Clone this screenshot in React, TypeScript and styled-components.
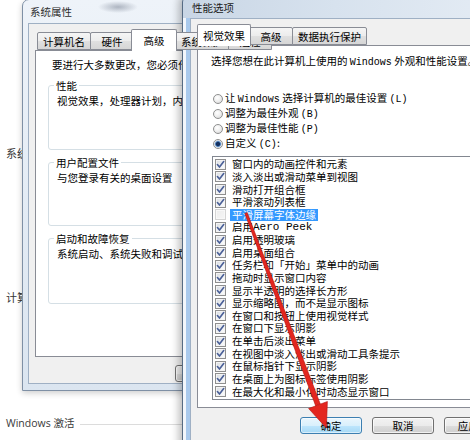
import React from "react";
import styled, { createGlobalStyle } from "styled-components";

const GlobalStyle = createGlobalStyle`
  html, body { margin: 0; padding: 0; background: #ffffff; }
  body {
    width: 470px; height: 440px; overflow: hidden;
    font-family: "Noto Sans CJK SC", "Noto Sans", sans-serif;
    font-size: 10.5px; color: #000;
  }
  * { box-sizing: border-box; }
`;

const Desktop = styled.div`
  position: relative;
  width: 470px;
  height: 440px;
  overflow: hidden;
  background: #ffffff;
`;

/* ---------- control panel page behind the dialogs ---------- */
const Backdrop = styled.div`
  position: absolute;
  inset: 0;
  display: flex;
  flex-direction: column;
  padding: 146px 0 0 6px;
`;

const BackHeading = styled.div<{ $mt?: number }>`
  margin-top: ${(p) => p.$mt ?? 0}px;
  font-size: 11px;
  line-height: 14px;
  color: #333;
`;

const ActivationRow = styled.div<{ $mt: number }>`
  margin-top: ${(p) => p.$mt}px;
  display: flex;
  align-items: center;
  gap: 6px;
  font-family: "Open Sans", "Noto Sans CJK SC", sans-serif;
  font-size: 10.5px;
  line-height: 14px;
  color: #3a3a3a;
`;

const ActivationLine = styled.span`
  flex: 1;
  height: 1px;
  margin-top: 3px;
  background: #dcdcdc;
`;

/* ---------- window chrome ---------- */
const Win = styled.div<{ $x: number; $y: number; $w: number; $h: number; $active?: boolean }>`
  position: absolute;
  left: ${(p) => p.$x}px;
  top: ${(p) => p.$y}px;
  width: ${(p) => p.$w}px;
  height: ${(p) => p.$h}px;
  display: flex;
  flex-direction: column;
  padding: ${(p) => (p.$active ? "0 7px 7px" : "0 5px 6px")};
  border: 1px solid ${(p) => (p.$active ? "#566b83" : "#7f90a5")};
  border-radius: 7px 7px 0 0;
  background: ${(p) =>
    p.$active
      ? `linear-gradient(90deg, #f2f6fb 0 3px, #a9c9ec 3px 7px, transparent 7px) left bottom / 100% calc(100% - 22px) no-repeat,
         linear-gradient(90deg, #c9d6e5 0%, #d7e2ee 45%, #e6edf5 100%)`
      : `radial-gradient(ellipse 20px 6px at 95px 7px, rgba(95,105,125,0.45), transparent),
         linear-gradient(180deg, #eef3f9 0%, #e4ecf5 50%, #dbe5f0 100%)`};
  box-shadow: ${(p) =>
    p.$active ? "-3px 0 8px rgba(0,0,0,0.28)" : "0 2px 6px rgba(0,0,0,0.2)"};
`;

const TitleBar = styled.div<{ $h: number; $dim?: boolean }>`
  flex: none;
  height: ${(p) => p.$h}px;
  display: flex;
  align-items: center;
  padding-left: 2px;
  font-size: 10.5px;
  color: ${(p) => (p.$dim ? "#2c2c2c" : "#1a1a1a")};
  white-space: nowrap;
`;

const Client = styled.div<{ $pb: number }>`
  flex: 1;
  min-height: 0;
  display: flex;
  flex-direction: column;
  background: #f0f0f0;
  border: 1px solid #9fb0c4;
  padding: 5px 6px ${(p) => p.$pb}px;
`;

/* ---------- tabs ---------- */
const TabStrip = styled.div`
  flex: none;
  height: 21px;
  display: flex;
  align-items: flex-end;
  padding-left: 2px;
  position: relative;
  z-index: 1;
`;

const Tab = styled.div<{ $selected?: boolean }>`
  height: ${(p) => (p.$selected ? 22 : 18)}px;
  min-width: ${(p) => (p.$selected ? 46 : 44)}px;
  margin: ${(p) => (p.$selected ? "0 -2px -1px -2px" : "0 -1px 0 0")};
  padding: 0 5px;
  display: flex;
  align-items: center;
  justify-content: center;
  border: 1px solid #898c95;
  border-bottom: ${(p) => (p.$selected ? "none" : "1px solid #898c95")};
  border-radius: 2px 2px 0 0;
  background: ${(p) =>
    p.$selected
      ? "#ffffff"
      : "linear-gradient(180deg, #f5f5f5 0%, #ececec 50%, #e0e0e0 51%, #d6d6d6 100%)"};
  position: relative;
  z-index: ${(p) => (p.$selected ? 2 : 1)};
  font-size: 10.5px;
  line-height: 13px;
  white-space: nowrap;
`;

const TabPanel = styled.div<{ $pad: string }>`
  flex: 1;
  min-height: 0;
  display: flex;
  flex-direction: column;
  background: #ffffff;
  border: 1px solid #898c95;
  padding: ${(p) => p.$pad};
  overflow: hidden;
`;

/* ---------- buttons ---------- */
const ButtonRow = styled.div<{ $mt: number }>`
  flex: none;
  margin-top: ${(p) => p.$mt}px;
  display: flex;
  justify-content: flex-end;
  gap: 10px;
`;

const Button = styled.div<{ $focused?: boolean }>`
  width: 62px;
  height: 17px;
  display: flex;
  align-items: center;
  justify-content: center;
  border: 1px solid ${(p) => (p.$focused ? "#3c7fb1" : "#707070")};
  border-radius: 3px;
  background: ${(p) =>
    p.$focused
      ? "linear-gradient(180deg, #eaf6fd 0%, #d9f0fc 50%, #bee6fd 51%, #a7d9f5 100%)"
      : "linear-gradient(180deg, #f2f2f2 0%, #ebebeb 50%, #dddddd 51%, #cfcfcf 100%)"};
  box-shadow: inset 0 0 0 1px ${(p) => (p.$focused ? "rgba(255,255,255,0.55)" : "rgba(255,255,255,0.7)")};
  font-size: 10.5px;
  line-height: 13px;
  color: #000;
  white-space: nowrap;
`;

/* ---------- 系统属性 content ---------- */
const PlainText = styled.div<{ $ml?: number }>`
  margin-left: ${(p) => p.$ml ?? 0}px;
  line-height: 13px;
  white-space: nowrap;
`;

const Groups = styled.div`
  margin-top: 8px;
  display: flex;
  flex-direction: column;
  gap: 6px;
`;

const Group = styled.fieldset<{ $h: number }>`
  margin: 0;
  padding: 0 8px;
  height: ${(p) => p.$h}px;
  min-inline-size: 0;
  border: 1px solid #d5dfe5;
  border-radius: 3px;
`;

const GroupTitle = styled.legend`
  margin-left: -3px;
  padding: 0 2px;
  line-height: 13px;
  white-space: nowrap;
`;

const GroupText = styled.div`
  margin-top: 2px;
  line-height: 13px;
  white-space: nowrap;
`;

/* ---------- 性能选项 content ---------- */
const Mono = styled.span<{ $size?: number }>`
  font-family: "Liberation Mono", "DejaVu Sans Mono", monospace;
  font-size: ${(p) => p.$size ?? 10}px;
`;

const RadioGroup = styled.div`
  margin-top: 22px;
  display: flex;
  flex-direction: column;
`;

const RadioRow = styled.div`
  height: 15px;
  margin-left: 2px;
  display: flex;
  align-items: center;
  gap: 2px;
  white-space: nowrap;
  line-height: 13px;
`;

const RadioDot = styled.span<{ $on?: boolean }>`
  flex: none;
  width: 10px;
  height: 10px;
  border-radius: 50%;
  border: 1px solid #8e8f8f;
  background: ${(p) =>
    p.$on
      ? "radial-gradient(circle at 50% 50%, #14305f 0 1.6px, #3f73b4 2.4px, #a9c3de 3.1px, #f2f2f2 3.8px)"
      : "radial-gradient(circle at 40% 35%, #ffffff 0%, #f0f0f0 45%, #d3d3d3 100%)"};
`;

const ListBox = styled.div`
  margin: 5px 0 0 1px;
  height: 244px;
  flex: none;
  border: 1px solid #828790;
  background: #ffffff;
  padding: 1px 2px;
  display: flex;
  flex-direction: column;
`;

const ListRow = styled.div`
  height: 12.65px;
  display: flex;
  align-items: center;
  white-space: nowrap;
`;

const CheckBox = styled.span<{ $checked: boolean }>`
  flex: none;
  width: 11px;
  height: 11px;
  display: inline-flex;
  align-items: center;
  justify-content: center;
  border: 1px solid ${(p) => (p.$checked ? "#8f8f8f" : "#d4d4d4")};
  background: ${(p) =>
    p.$checked
      ? "linear-gradient(135deg, #d6dae0 0%, #eef0f2 55%, #ffffff 100%)"
      : "linear-gradient(135deg, #ececec 0%, #f6f6f6 100%)"};
  box-shadow: inset 0 0 0 1px ${(p) => (p.$checked ? "#f4f4f4" : "#f8f8f8")};
`;

const ItemLabel = styled.span<{ $selected?: boolean }>`
  margin-left: 4px;
  padding: 0 2px;
  height: 12px;
  display: inline-flex;
  align-items: center;
  line-height: 12px;
  font-size: 10.5px;
  background: ${(p) => (p.$selected ? "#3399ff" : "transparent")};
  color: ${(p) => (p.$selected ? "#ffffff" : "#000000")};
`;

const ArrowLayer = styled.svg`
  position: absolute;
  left: 0;
  top: 0;
  width: 470px;
  height: 440px;
  pointer-events: none;
  z-index: 10;
`;

const CheckMark = () => (
  <svg width="9" height="9" viewBox="0 0 9 9" aria-hidden="true">
    <path
      d="M1.4 4.6 L3.5 7.1 L7.7 1.5"
      fill="none"
      stroke="#4a5f97"
      strokeWidth="1.6"
      strokeLinecap="round"
      strokeLinejoin="round"
    />
  </svg>
);

type Item = { label: React.ReactNode; checked: boolean; selected?: boolean };

const items: Item[] = [
  { label: "窗口内的动画控件和元素", checked: true },
  { label: "淡入淡出或滑动菜单到视图", checked: true },
  { label: "滑动打开组合框", checked: true },
  { label: "平滑滚动列表框", checked: true },
  { label: "平滑屏幕字体边缘", checked: false, selected: true },
  {
    label: (
      <>
        启用 <Mono $size={11}>Aero Peek</Mono>
      </>
    ),
    checked: true,
  },
  { label: "启用透明玻璃", checked: true },
  { label: "启用桌面组合", checked: true },
  { label: "任务栏和「开始」菜单中的动画", checked: true },
  { label: "拖动时显示窗口内容", checked: true },
  { label: "显示半透明的选择长方形", checked: true },
  { label: "显示缩略图，而不是显示图标", checked: true },
  { label: "在窗口和按钮上使用视觉样式", checked: true },
  { label: "在窗口下显示阴影", checked: true },
  { label: "在单击后淡出菜单", checked: true },
  { label: "在视图中淡入淡出或滑动工具条提示", checked: true },
  { label: "在鼠标指针下显示阴影", checked: true },
  { label: "在桌面上为图标标签使用阴影", checked: true },
  { label: "在最大化和最小化时动态显示窗口", checked: true },
];

export default function App() {
  return (
    <>
      <GlobalStyle />
      <Desktop>
        <Backdrop>
          <BackHeading>系统</BackHeading>
          <BackHeading $mt={130}>计算机名称</BackHeading>
          <ActivationRow $mt={112}>
            <span>Windows 激活</span>
            <ActivationLine />
          </ActivationRow>
        </Backdrop>

        {/* 系统属性 (inactive, behind) */}
        <Win $x={22} $y={-1} $w={372} $h={392}>
          <TitleBar $h={23} $dim>
            系统属性
          </TitleBar>
          <Client $pb={1}>
            <TabStrip>
              <Tab>计算机名</Tab>
              <Tab>硬件</Tab>
              <Tab $selected>高级</Tab>
              <Tab>系统保护</Tab>
              <Tab>远程</Tab>
            </TabStrip>
            <TabPanel $pad="7px 12px 0">
              <PlainText $ml={4}>要进行大多数更改，您必须作为管理员登录。</PlainText>
              <Groups>
                <Group $h={71}>
                  <GroupTitle>性能</GroupTitle>
                  <GroupText>视觉效果，处理器计划，内存使用，以及虚拟内存</GroupText>
                </Group>
                <Group $h={70}>
                  <GroupTitle>用户配置文件</GroupTitle>
                  <GroupText>与您登录有关的桌面设置</GroupText>
                </Group>
                <Group $h={72}>
                  <GroupTitle>启动和故障恢复</GroupTitle>
                  <GroupText>系统启动、系统失败和调试信息</GroupText>
                </Group>
              </Groups>
            </TabPanel>
            <ButtonRow $mt={8}>
              <Button>确定</Button>
              <Button>取消</Button>
              <Button>应用(A)</Button>
            </ButtonRow>
          </Client>
        </Win>

        {/* 性能选项 (active, front) */}
        <Win $x={182} $y={-5} $w={339} $h={456} $active>
          <TitleBar $h={22}>性能选项</TitleBar>
          <Client $pb={8}>
            <TabStrip>
              <Tab $selected>视觉效果</Tab>
              <Tab>高级</Tab>
              <Tab>数据执行保护</Tab>
            </TabStrip>
            <TabPanel $pad="8px 13px 0">
              <PlainText>
                选择您想在此计算机上使用的 <Mono>Windows</Mono> 外观和性能设置。
              </PlainText>
              <RadioGroup>
                <RadioRow>
                  <RadioDot />
                  <span>
                    让 <Mono>Windows</Mono> 选择计算机的最佳设置 <Mono>(L)</Mono>
                  </span>
                </RadioRow>
                <RadioRow>
                  <RadioDot />
                  <span>
                    调整为最佳外观 <Mono>(B)</Mono>
                  </span>
                </RadioRow>
                <RadioRow>
                  <RadioDot />
                  <span>
                    调整为最佳性能 <Mono>(P)</Mono>
                  </span>
                </RadioRow>
                <RadioRow>
                  <RadioDot $on />
                  <span>
                    自定义 <Mono>(C)</Mono>:
                  </span>
                </RadioRow>
              </RadioGroup>
              <ListBox>
                {items.map((it, i) => (
                  <ListRow key={i}>
                    <CheckBox $checked={it.checked}>{it.checked && <CheckMark />}</CheckBox>
                    <ItemLabel $selected={it.selected}>{it.label}</ItemLabel>
                  </ListRow>
                ))}
              </ListBox>
            </TabPanel>
            <ButtonRow $mt={9}>
              <Button $focused>确定</Button>
              <Button>取消</Button>
              <Button>应用(A)</Button>
            </ButtonRow>
          </Client>
        </Win>

        <ArrowLayer viewBox="0 0 470 440" aria-hidden="true">
          <polygon
            points="247.2,212.6 244.8,213.4 315.7,405.9 320.3,404.1"
            fill="#e3261f"
            stroke="#b3140f"
            strokeWidth="0.6"
          />
          <polygon
            points="308.6,408.5 327.4,401.5 326.4,428"
            fill="#e3261f"
            stroke="#b3140f"
            strokeWidth="0.6"
            strokeLinejoin="round"
          />
        </ArrowLayer>
      </Desktop>
    </>
  );
}
